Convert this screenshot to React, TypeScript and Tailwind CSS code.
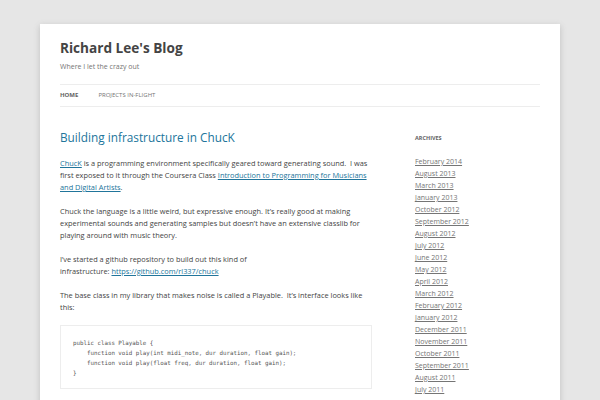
const archives = [
  "February 2014",
  "August 2013",
  "March 2013",
  "January 2013",
  "October 2012",
  "September 2012",
  "August 2012",
  "July 2012",
  "June 2012",
  "May 2012",
  "April 2012",
  "March 2012",
  "February 2012",
  "January 2012",
  "December 2011",
  "November 2011",
  "October 2011",
  "September 2011",
  "August 2011",
  "July 2011",
];

export default function App() {
  return (
    <div className="h-[400px] overflow-hidden bg-[#e6e6e6] pt-[24px] font-['Open_Sans',sans-serif]">
      <div className="mx-[40px] h-[400px] bg-white px-[20px] shadow-[0_2px_6px_rgba(100,100,100,0.3)]">
        {/* Header */}
        <div className="pt-[15px]">
          <h1 className="text-[13.6px] font-bold leading-[18px] text-[#444]">Richard Lee's Blog</h1>
          <p className="mt-[4px] text-[7px] leading-[12px] text-[#757575]">Where I let the crazy out</p>
        </div>
        <nav className="mt-[11px] flex h-[23px] items-center gap-[20px] border-y border-[#ededed] text-[6px] uppercase">
          <span className="font-bold text-[#636363]">Home</span>
          <span className="text-[#757575]">Projects in-flight</span>
        </nav>

        <div className="mt-[21px] flex">
          {/* Main */}
          <main className="w-[312px]">
            <h2 className="text-[11.8px] leading-[18px] text-[#21759b]">Building infrastructure in ChucK</h2>
            <div className="mt-[11px] space-y-[12px] text-[7.4px] leading-[12px] text-[#444]">
              <p>
                <a className="text-[#21759b] underline">ChucK</a> is a programming environment specifically geared toward generating sound.&nbsp; I was first exposed to it through the Coursera Class{" "}
                <a className="text-[#21759b] underline">Introduction to Programming for Musicians and Digital Artists</a>.
              </p>
              <p>
                Chuck the language is a little weird, but expressive enough. It’s really good at making experimental sounds and generating samples but doesn’t have an extensive classlib for playing around with music theory.
              </p>
              <p>
                I’ve started a github repository to build out this kind of
                <br />
                infrastructure: <a className="text-[#21759b] underline">https://github.com/rl337/chuck</a>
              </p>
              <p>The base class in my library that makes noise is called a Playable.&nbsp; It’s interface looks like this:</p>
            </div>
            <pre className="mt-[12px] border border-[#ededed] px-[12px] pt-[12px] pb-[10px] font-['DejaVu_Sans_Mono',monospace] text-[5.8px] leading-[10px] text-[#555]">
{`public class Playable {
    function void play(int midi_note, dur duration, float gain);
    function void play(float freq, dur duration, float gain);
}`}
            </pre>
          </main>

          {/* Sidebar */}
          <aside className="ml-[43px] mt-[4px]">
            <h3 className="text-[5.5px] font-bold uppercase leading-[12px] text-[#636363]">Archives</h3>
            <ul className="mt-[12px] text-[7px] leading-[12px]">
              {archives.map((a) => (
                <li key={a}>
                  <a className="text-[#757575] underline">{a}</a>
                </li>
              ))}
            </ul>
          </aside>
        </div>
      </div>
    </div>
  );
}
